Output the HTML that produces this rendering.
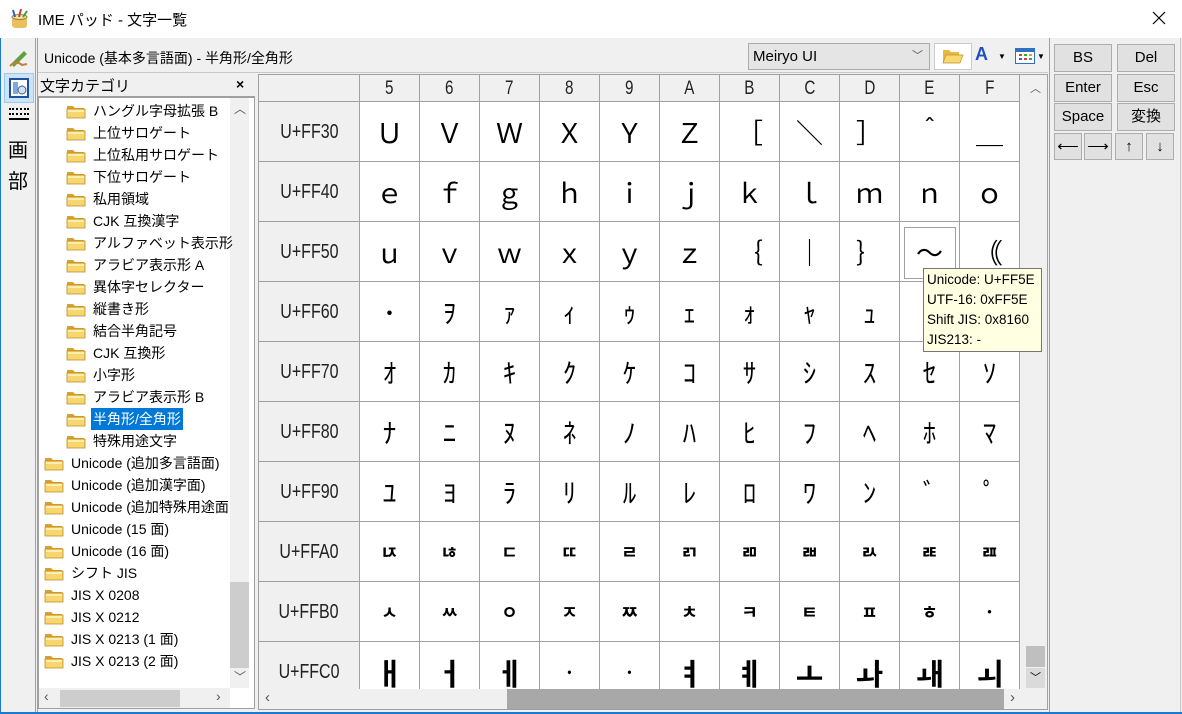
<!DOCTYPE html><html><head><meta charset="utf-8"><style>
*{margin:0;padding:0;box-sizing:border-box}
body{width:1182px;height:714px;overflow:hidden;background:#f0f0f0;font-family:"Liberation Sans","Noto Sans CJK JP",sans-serif;font-size:14px;color:#000;position:relative}
.a{position:absolute}
.btn{position:absolute;background:#e1e1e1;border:1px solid #adadad;text-align:center;font-size:15px;line-height:26px}
.ti{position:absolute;height:22px;line-height:22px;white-space:nowrap;font-size:14px}
.ti svg{position:absolute;left:0;top:4px}
.ti span{position:absolute;left:25px;top:0;padding:0 2px}
.gh{position:absolute;top:75px;height:27px;background:#f0f0f0;border-right:1px solid #a0a0a0;border-bottom:1px solid #a0a0a0;text-align:center;font-size:19px;line-height:28px;font-weight:300;color:#222}
.gh i,.rh i{display:inline-block;font-style:normal;transform:scaleX(.8)}
.rh{position:absolute;left:259px;width:101px;height:60px;background:#f0f0f0;border-right:1px solid #a0a0a0;border-bottom:1px solid #a0a0a0;text-align:center;line-height:60px;font-size:20px;color:#222}
.c{position:absolute;width:60px;height:60px;background:#fff;border-right:1px solid #a0a0a0;border-bottom:1px solid #a0a0a0;text-align:center;line-height:60px;font-size:27px;font-family:"Noto Sans CJK JP","Liberation Sans",sans-serif;color:#000;overflow:hidden}
</style></head><body>
<div class="a" style="left:0;top:0;width:1182px;height:38px;background:#fff"></div>
<svg class="a" style="left:9px;top:8px" width="22" height="22" viewBox="0 0 22 22"><rect x="3" y="9" width="15" height="11" rx="3" fill="#e8c060"/><ellipse cx="10.5" cy="9" rx="7.5" ry="2.5" fill="#f4e4a0" stroke="#a08030"/><line x1="6" y1="9" x2="4" y2="2" stroke="#3060c0" stroke-width="2"/><line x1="10" y1="9" x2="12" y2="1" stroke="#c04040" stroke-width="2"/><line x1="14" y1="9" x2="18" y2="3" stroke="#40a040" stroke-width="2"/></svg>
<div class="a" style="left:38px;top:9px;font-size:15px">IME パッド - 文字一覧</div>
<svg class="a" style="left:1152px;top:11px" width="14" height="14"><path d="M1 1L13 13M13 1L1 13" stroke="#000" stroke-width="1.2"/></svg>
<div class="a" style="left:0;top:38px;width:1px;height:676px;background:#1c79d0"></div>
<div class="a" style="left:1180px;top:38px;width:1px;height:676px;background:#c8c8c8"></div>
<div class="a" style="left:0;top:712px;width:1182px;height:2px;background:#1c79d0"></div>
<div class="a" style="left:35px;top:38px;width:1px;height:674px;background:#a0a0a0"></div>
<div class="a" style="left:37px;top:38px;width:1px;height:674px;background:#a0a0a0"></div>
<svg class="a" style="left:8px;top:48px" width="22" height="20"><path d="M3 16 L16 3 L19 6 L6 19Z" fill="#60a040"/><path d="M2 18 Q8 12 14 17 L19 16" stroke="#c08040" stroke-width="2" fill="none"/></svg>
<div class="a" style="left:4px;top:73px;width:30px;height:30px;background:#cce4f7;border:1px solid #99c9ef"></div>
<svg class="a" style="left:9px;top:78px" width="21" height="21"><rect x="1" y="1" width="18" height="18" fill="#fff" stroke="#2050a0" stroke-width="2"/><rect x="4" y="4" width="5" height="12" fill="#80a8e0"/><circle cx="13" cy="12" r="4" fill="#cfe0f0" stroke="#406080"/></svg>
<div class="a" style="left:9px;top:108px;width:20px;height:12px;border-top:2px dotted #000;border-bottom:2px solid #000"></div>
<div class="a" style="left:9px;top:113px;width:20px;border-top:2px dotted #000"></div>
<div class="a" style="left:8px;top:134px;font-size:20px">画</div>
<div class="a" style="left:8px;top:165px;font-size:20px">部</div>
<div class="a" style="left:44px;top:48px;font-size:14px">Unicode (基本多言語面) - 半角形/全角形</div>
<div class="a" style="left:748px;top:43px;width:182px;height:27px;background:#e5e5e5;border:1px solid #acacac;padding-left:4px;line-height:25px;font-size:15px">Meiryo UI<span style="position:absolute;right:6px;top:0;font-size:11px;color:#555">﹀</span></div>
<div class="a" style="left:934px;top:43px;width:38px;height:27px;background:#fff;border:1px solid #ccc"></div>
<svg class="a" style="left:942px;top:47px" width="22" height="18"><path d="M1 3h6l2 2h8v11H1Z" fill="#e8b840"/><path d="M4 8h17l-3 8H1Z" fill="#f8d870" stroke="#c09030" stroke-width=".7"/></svg>
<div class="a" style="left:975px;top:44px;font-size:18px;font-weight:bold;color:#2050c0">A</div>
<div class="a" style="left:998px;top:52px;font-size:8px">▼</div>
<svg class="a" style="left:1015px;top:48px" width="20" height="16"><rect x=".5" y=".5" width="19" height="15" fill="#fff" stroke="#3070c0"/><rect x="1" y="1" width="18" height="3" fill="#3070c0"/><rect x="4" y="6" width="3" height="2" fill="#d04040"/><rect x="9" y="6" width="3" height="2" fill="#40a040"/><rect x="14" y="6" width="3" height="2" fill="#e0a020"/><rect x="4" y="10" width="3" height="2" fill="#3060c0"/><rect x="9" y="10" width="3" height="2" fill="#d04040"/><rect x="14" y="10" width="3" height="2" fill="#40a040"/></svg>
<div class="a" style="left:1037px;top:52px;font-size:8px">▼</div>
<div class="a" style="left:38px;top:72px;width:1010px;height:1px;background:#c8c8c8"></div>
<div class="a" style="left:38px;top:73px;width:217px;height:24px;background:#f0f0f0;border-bottom:1px solid #a0a0a0"></div>
<div class="a" style="left:40px;top:75px;font-size:15px">文字カテゴリ</div>
<div class="a" style="left:236px;top:76px;font-size:14px;font-weight:bold">×</div>
<div class="a" style="left:38px;top:97px;width:217px;height:612px;background:#fff;border:1px solid #a0a0a0"></div>
<div class="a" style="left:230px;top:98px;width:19px;height:590px;background:#f0f0f0"></div>
<div class="a" style="left:230px;top:582px;width:19px;height:86px;background:#cdcdcd"></div>
<div class="a" style="left:234px;top:100px;font-size:12px;color:#555">︿</div>
<div class="a" style="left:234px;top:668px;font-size:12px;color:#555">﹀</div>
<div class="a" style="left:39px;top:688px;width:191px;height:20px;background:#f0f0f0"></div>
<div class="a" style="left:60px;top:690px;width:120px;height:17px;background:#cdcdcd"></div>
<div class="a" style="left:44px;top:688px;font-size:14px;color:#555">‹</div>
<div class="a" style="left:216px;top:688px;font-size:14px;color:#555">›</div>
<div id="tree"></div>
<div class="a" style="left:256px;top:73px;width:3px;height:636px;background:#f0f0f0"></div>
<div class="a" style="left:258px;top:74px;width:790px;height:636px;border:1px solid #a0a0a0;background:#f0f0f0"></div>
<div id="grid"></div>
<div class="a" style="left:1022px;top:75px;width:24px;height:613px;background:#f0f0f0"></div>
<div class="a" style="left:1026px;top:646px;width:19px;height:21px;background:#bfbfbf"></div>
<div class="a" style="left:1026px;top:668px;width:19px;height:20px;background:#dadada;text-align:center;font-size:11px;line-height:20px">﹀</div>
<div class="a" style="left:1030px;top:80px;font-size:11px;color:#555">︿</div>
<div class="a" style="left:259px;top:689px;width:787px;height:20px;background:#f0f0f0"></div>
<div class="a" style="left:507px;top:689px;width:497px;height:20px;background:#a8a8a8"></div>
<div class="a" style="left:265px;top:689px;font-size:15px;color:#555">‹</div>
<div class="a" style="left:1010px;top:689px;font-size:15px;color:#555">›</div>
<div class="a" style="left:923px;top:268px;width:119px;height:84px;background:#ffffe1;border:1px solid #767676;padding:1px 0 0 3px;font-size:13.5px;line-height:20px;color:#000">Unicode: U+FF5E<br>UTF-16: 0xFF5E<br>Shift JIS: 0x8160<br>JIS213: -</div>
<div class="a" style="left:1049px;top:38px;width:1px;height:674px;background:#a0a0a0"></div>
<div class="btn" style="left:1054px;top:44px;width:58px;height:28px">BS</div>
<div class="btn" style="left:1117px;top:44px;width:58px;height:28px">Del</div>
<div class="btn" style="left:1054px;top:74px;width:58px;height:28px">Enter</div>
<div class="btn" style="left:1117px;top:74px;width:58px;height:28px">Esc</div>
<div class="btn" style="left:1054px;top:103px;width:58px;height:28px">Space</div>
<div class="btn" style="left:1117px;top:103px;width:58px;height:28px">変換</div>
<div class="btn" style="left:1054px;top:133px;width:28px;height:27px">⟵</div>
<div class="btn" style="left:1084px;top:133px;width:28px;height:27px">⟶</div>
<div class="btn" style="left:1115px;top:133px;width:28px;height:27px">↑</div>
<div class="btn" style="left:1146px;top:133px;width:28px;height:27px">↓</div>
<script>
var f='<svg width="20" height="15" viewBox="0 0 20 15"><path d="M1 2h6l2 2h9v10H1Z" fill="#d8a030"/><path d="M1 5h18v9H1Z" fill="#f6d66e" stroke="#c08a20" stroke-width=".8"/><path d="M2 6h16v2H2Z" fill="#fbeeb0"/></svg>';
var sub=["ハングル字母拡張 B","上位サロゲート","上位私用サロゲート","下位サロゲート","私用領域","CJK 互換漢字","アルファベット表示形","アラビア表示形 A","異体字セレクター","縦書き形","結合半角記号","CJK 互換形","小字形","アラビア表示形 B","半角形/全角形","特殊用途文字"];
var top2=["Unicode (追加多言語面)","Unicode (追加漢字面)","Unicode (追加特殊用途面","Unicode (15 面)","Unicode (16 面)","シフト JIS","JIS X 0208","JIS X 0212","JIS X 0213 (1 面)","JIS X 0213 (2 面)"];
var h='',y=100;
sub.forEach(function(t){var s=t=="半角形/全角形"?' style="background:#0078d7;color:#fff"':'';h+='<div class="ti" style="left:66px;top:'+y+'px">'+f+'<span'+s+'>'+t+'</span></div>';y+=22;});
top2.forEach(function(t){h+='<div class="ti" style="left:44px;top:'+y+'px;width:186px;overflow:hidden">'+f+'<span>'+t+'</span></div>';y+=22;});
document.getElementById('tree').innerHTML=h;
var cols="56789ABCDEF",g='<div class="gh" style="left:259px;width:101px"></div>';
for(var i=0;i<11;i++)g+='<div class="gh" style="left:'+(360+i*60)+'px;width:60px"><i>'+cols[i]+'</i></div>';
var rows=[["U+FF30","ＵＶＷＸＹＺ［＼］＾＿"],["U+FF40","ｅｆｇｈｉｊｋｌｍｎｏ"],["U+FF50","ｕｖｗｘｙｚ｛｜｝～｟"],["U+FF60","･ｦｧｨｩｪｫｬｭｮｯ"],["U+FF70","ｵｶｷｸｹｺｻｼｽｾｿ"],["U+FF80","ﾅﾆﾇﾈﾉﾊﾋﾌﾍﾎﾏ"],["U+FF90","ﾕﾖﾗﾘﾙﾚﾛﾜﾝﾞﾟ"],["U+FFA0","ﾥﾦﾧﾨﾩﾪﾫﾬﾭﾮﾯ"],["U+FFB0","ﾵﾶﾷﾸﾹﾺﾻﾼﾽﾾ･"],["U+FFC0","ㅐㅓㅔ··ㅕㅖㅗㅘㅙㅚ"]];
rows.forEach(function(r,k){var ty=102+k*60;g+='<div class="rh" style="top:'+ty+'px"><i>'+r[0]+'</i></div>';var ch=Array.from(r[1]);for(var i=0;i<11;i++){var fs=k>=7?18:27;if(k==9&&ch[i]!='·')fs=30;g+='<div class="c" style="left:'+(360+i*60)+'px;top:'+ty+'px;font-size:'+fs+'px;font-weight:'+(k>=7?'bold':'normal')+'">'+ch[i]+'</div>';}});
g+='<div class="a" style="left:904px;top:227px;width:52px;height:52px;border:1px solid #a0a0a0"></div>';
document.getElementById('grid').innerHTML=g;
</script>
</body></html>
